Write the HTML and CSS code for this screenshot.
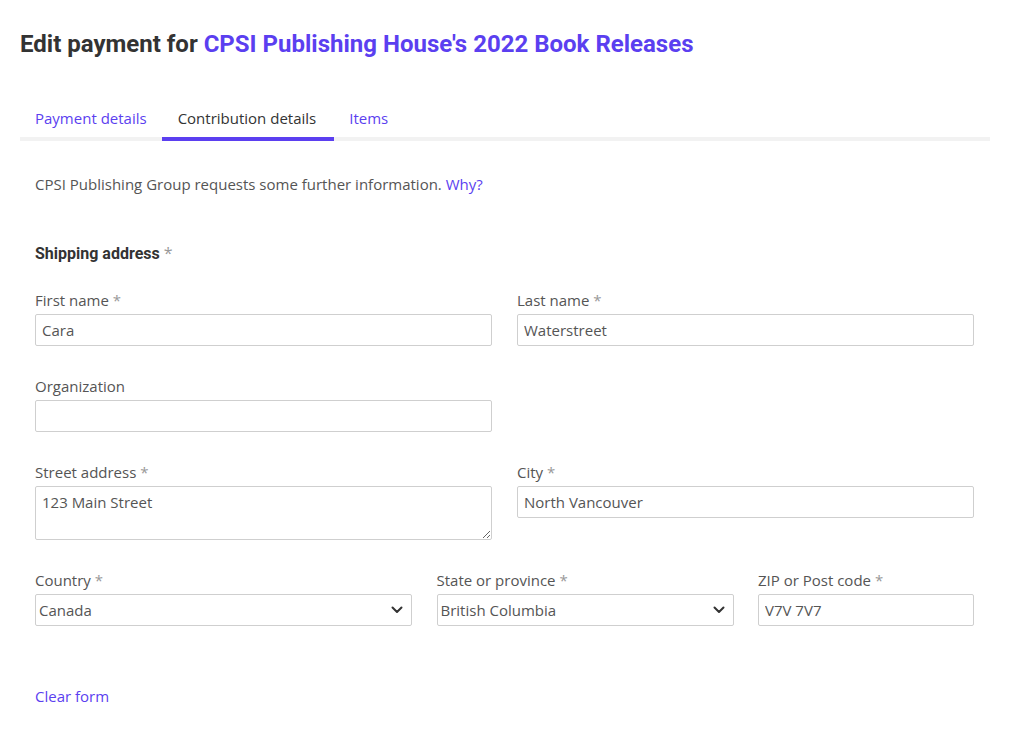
FILE: index.html
```html
<!DOCTYPE html>
<html lang="en">
<head>
<meta charset="UTF-8" />
<meta name="viewport" content="width=device-width, initial-scale=1" />
<title>Edit payment</title>
<link rel="stylesheet" href="styles.css">
</head>
<body>

<div class="page">
  <h1 class="page-title">Edit payment for <a href="#">CPSI Publishing House's 2022 Book Releases</a></h1>

  <!-- TABS -->
  <nav class="tabs">
    <a class="tab" href="#">Payment details</a>
    <a class="tab active" href="#">Contribution details</a>
    <a class="tab" href="#">Items</a>
  </nav>

  <div class="panel">
    <p class="intro">CPSI Publishing Group requests some further information. <a href="#">Why?</a></p>

    <h2 class="group-title">Shipping address <span class="req">*</span></h2>

    <form class="form">
      <div class="row two">
        <div class="field">
          <label for="firstName">First name <span class="req">*</span></label>
          <input type="text" id="firstName" value="Cara" />
        </div>
        <div class="field">
          <label for="lastName">Last name <span class="req">*</span></label>
          <input type="text" id="lastName" value="Waterstreet" />
        </div>
      </div>

      <div class="row two">
        <div class="field">
          <label for="org">Organization</label>
          <input type="text" id="org" value="" />
        </div>
      </div>

      <div class="row two">
        <div class="field">
          <label for="street">Street address <span class="req">*</span></label>
          <textarea id="street">123 Main Street</textarea>
        </div>
        <div class="field">
          <label for="city">City <span class="req">*</span></label>
          <input type="text" id="city" value="North Vancouver" />
        </div>
      </div>

      <div class="row three">
        <div class="field">
          <label for="country">Country <span class="req">*</span></label>
          <div class="select-wrap">
            <select id="country">
              <option>Canada</option>
            </select>
            <svg class="chevron" width="12" height="8" viewBox="0 0 12 8"><path d="M1.5 1.5 L6 6 L10.5 1.5" fill="none" stroke="#333" stroke-width="2" stroke-linecap="round" stroke-linejoin="round"/></svg>
          </div>
        </div>
        <div class="field">
          <label for="state">State or province <span class="req">*</span></label>
          <div class="select-wrap">
            <select id="state">
              <option>British Columbia</option>
            </select>
            <svg class="chevron" width="12" height="8" viewBox="0 0 12 8"><path d="M1.5 1.5 L6 6 L10.5 1.5" fill="none" stroke="#333" stroke-width="2" stroke-linecap="round" stroke-linejoin="round"/></svg>
          </div>
        </div>
        <div class="field">
          <label for="zip">ZIP or Post code <span class="req">*</span></label>
          <input type="text" id="zip" value="V7V 7V7" />
        </div>
      </div>
    </form>

    <a class="clear" href="#">Clear form</a>
  </div>
</div>

</body>
</html>
```

FILE: styles.css
```css
:root {
  --purple: #5b3ff0;
  --text: #555;
  --border: #cfcfcf;
}
* {
  box-sizing: border-box;
  margin: 0;
  padding: 0;
}
body {
  background: #fff;
  color: var(--text);
  font-family: 'Open Sans', sans-serif;
  font-size: 15px;
  line-height: 20px;
}
a {
  color: var(--purple);
  text-decoration: none;
}
.page {
  padding: 28px 28px 0 20px;
}

/* TITLE */
.page-title {
  font-family: Roboto, sans-serif;
  font-weight: 700;
  font-size: 24px;
  line-height: 32px;
  color: #333;
}

/* TABS */
.tabs {
  display: flex;
  margin-top: 48px;
  border-bottom: 4px solid #f2f2f2;
}
.tab {
  padding: 0 15px 9px;
  font-size: 15px;
  line-height: 20px;
  color: var(--purple);
  border-bottom: 4px solid transparent;
  margin-bottom: -4px;
}
.tab.active {
  padding: 0 18px 9px 16px;
  color: #333;
  border-bottom-color: var(--purple);
}

/* PANEL */
.panel {
  padding: 33px 16px 0 15px;
}
.group-title {
  margin-top: 49px;
  font-family: Roboto, sans-serif;
  font-weight: 700;
  font-size: 16px;
  line-height: 20px;
  color: #333;
}
.req {
  color: #999;
  font-weight: 400;
}
.group-title .req {
  font-family: 'Open Sans', sans-serif;
}
.form {
  margin-top: 26px;
  display: flex;
  flex-direction: column;
  gap: 30px;
}
.row {
  display: grid;
  column-gap: 25px;
}
.row.two {
  grid-template-columns: 1fr 1fr;
}
.row.three {
  grid-template-columns: 377fr 297fr 216fr;
  column-gap: 24.5px;
}
.field label {
  display: block;
  margin-bottom: 4px;
}
input, textarea, select {
  display: block;
  width: 100%;
  border: 1px solid var(--border);
  border-radius: 2px;
  background: #fff;
  font-family: 'Open Sans', sans-serif;
  font-size: 15px;
  color: var(--text);
}
input {
  height: 32px;
  padding: 0 6px;
}
textarea {
  height: 54px;
  padding: 5px 6px;
  line-height: 20px;
}
.select-wrap {
  position: relative;
}
select {
  height: 32px;
  padding: 0 30px 0 3px;
  appearance: none;
  -webkit-appearance: none;
}
.chevron {
  position: absolute;
  right: 9px;
  top: 12px;
  pointer-events: none;
}
.clear {
  display: inline-block;
  margin-top: 60px;
}
```
